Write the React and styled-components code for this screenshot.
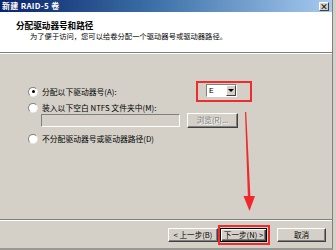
import React from "react";
import styled, { createGlobalStyle } from "styled-components";

const Global = createGlobalStyle`
  html, body { margin: 0; padding: 0; background: #d4d0c8; }
  body { font-family: "Noto Sans CJK SC", "Liberation Sans", sans-serif; }
`;

const Window = styled.div`
  position: relative;
  width: 332px;
  height: 248px;
  display: flex;
  flex-direction: column;
  background: #d4d0c8;
  border-right: 1px solid #808080;
  border-bottom: 2px solid #9a9892;
  box-sizing: content-box;
  overflow: hidden;
`;

const TitleBar = styled.div`
  height: 12px;
  display: flex;
  align-items: center;
  justify-content: space-between;
  padding: 0 3px 0 2px;
  background: linear-gradient(to right, #0a246a 0%, #3a6ea5 45%, #a6caf0 100%);
`;

const TitleText = styled.span`
  color: #fff;
  font-weight: bold;
  font-size: 8px;
  line-height: 12px;
  letter-spacing: 0.3px;
`;

const CloseBox = styled.div`
  width: 8px;
  height: 7px;
  background: #d4d0c8;
  border: 1px solid;
  border-color: #fff #404040 #404040 #fff;
  display: flex;
  align-items: center;
  justify-content: center;
  font-size: 8px;
  line-height: 7px;
  font-weight: bold;
  color: #000;
`;

const Header = styled.div`
  height: 40px;
  background: #fff;
  padding: 7px 0 0 16px;
  box-sizing: border-box;
`;

const Heading = styled.div`
  font-size: 8.6px;
  font-weight: bold;
  line-height: 12px;
  color: #000;
`;

const SubText = styled.div`
  font-size: 7.3px;
  line-height: 10px;
  padding-left: 14px;
  color: #000;
`;

const Separator = styled.div`
  height: 0;
  border-top: 1px solid #808080;
  border-bottom: 1px solid #fff;
`;

const Body = styled.div`
  height: 165px;
  padding: 27px 0 0 28px;
  box-sizing: border-box;
  display: flex;
  flex-direction: column;
`;

const OptionRow = styled.div`
  display: flex;
  align-items: center;
  height: ${(p) => p.h || 15}px;
`;

const Radio = styled.span`
  width: 8px;
  height: 8px;
  border-radius: 50%;
  background: #fff;
  border: 1px solid #808080;
  border-right-color: #e8e8e8;
  border-bottom-color: #e8e8e8;
  display: flex;
  align-items: center;
  justify-content: center;
  margin-right: 4px;
  flex-shrink: 0;
  &::after {
    content: "";
    width: 3px;
    height: 3px;
    border-radius: 50%;
    background: ${(p) => (p.checked ? "#000" : "transparent")};
  }
`;

const Label = styled.span`
  font-size: 7.8px;
  line-height: 10px;
  color: #000;
  width: ${(p) => (p.w ? p.w + "px" : "auto")};
  white-space: nowrap;
`;

const Highlight = styled.div`
  border: 2px solid #ee2c2c;
  padding: ${(p) => p.pad};
  display: flex;
`;

const Combo = styled.div`
  width: 31px;
  height: 13px;
  box-sizing: border-box;
  display: flex;
  background: #fff;
  border: 1px solid;
  border-color: #808080 #fff #fff #808080;
`;

const ComboValue = styled.span`
  flex: 1;
  font-family: "Liberation Mono", monospace;
  font-size: 8px;
  line-height: 11px;
  padding-left: 2px;
  color: #000;
`;

const ComboButton = styled.div`
  width: 10px;
  background: #d4d0c8;
  border: 1px solid;
  border-color: #fff #404040 #404040 #fff;
  box-sizing: border-box;
  display: flex;
  align-items: center;
  justify-content: center;
  &::after {
    content: "";
    border-left: 3px solid transparent;
    border-right: 3px solid transparent;
    border-top: 3px solid #000;
  }
`;

const FolderRow = styled.div`
  display: flex;
  align-items: center;
  padding-left: 13px;
  height: 14px;
  margin-bottom: 4px;
`;

const TextField = styled.div`
  width: 139px;
  height: 13px;
  box-sizing: border-box;
  border: 1px solid;
  border-color: #808080 #fff #fff #808080;
  background: #d4d0c8;
`;

const Button = styled.div`
  width: ${(p) => p.w}px;
  height: ${(p) => p.h || 14}px;
  box-sizing: border-box;
  background: #d4d0c8;
  border: 1px solid;
  border-color: ${(p) => (p.isDefault ? "#000" : "#fff #404040 #404040 #fff")};
  box-shadow: ${(p) =>
    p.isDefault
      ? "inset 1px 1px #fff, inset -1px -1px #404040, inset -2px -2px #808080"
      : "inset -1px -1px #808080"};
  display: flex;
  align-items: center;
  justify-content: center;
  font-size: 7.6px;
  line-height: 10px;
  white-space: nowrap;
  color: ${(p) => (p.disabled ? "#808080" : "#000")};
  text-shadow: ${(p) => (p.disabled ? "1px 1px #fff" : "none")};
  margin-left: ${(p) => p.ml || 0}px;
  margin-top: ${(p) => p.mt || 0}px;
`;

const Footer = styled.div`
  height: 27px;
  display: flex;
  align-items: flex-start;
  padding: 4px 0 0 168px;
  box-sizing: border-box;
`;

const ArrowOverlay = styled.svg`
  position: absolute;
  left: 236px;
  top: 110px;
  pointer-events: none;
`;

export default function App() {
  return (
    <>
      <Global />
      <Window>
        <TitleBar>
          <TitleText>新建 RAID-5 卷</TitleText>
          <CloseBox>×</CloseBox>
        </TitleBar>
        <Header>
          <Heading>分配驱动器号和路径</Heading>
          <SubText>为了便于访问，您可以给卷分配一个驱动器号或驱动器路径。</SubText>
        </Header>
        <Separator />
        <Body>
          <OptionRow h={21}>
            <Radio checked />
            <Label w={154}>分配以下驱动器号(A):</Label>
            <Highlight pad="1px 13px 3px 8px">
              <Combo>
                <ComboValue>E</ComboValue>
                <ComboButton />
              </Combo>
            </Highlight>
          </OptionRow>
          <OptionRow h={11}>
            <Radio />
            <Label>装入以下空白 NTFS 文件夹中(M):</Label>
          </OptionRow>
          <FolderRow>
            <TextField />
            <Button w={51} h={15} ml={7} disabled>
              浏览(R)...
            </Button>
          </FolderRow>
          <OptionRow>
            <Radio />
            <Label>不分配驱动器号或驱动器路径(D)</Label>
          </OptionRow>
        </Body>
        <Separator />
        <Footer>
          <Button w={50} mt={3}>
            &lt; 上一步(B)
          </Button>
          <Highlight pad="1px 1px 1px 0">
            <Button w={47} isDefault>
              下一步(N) &gt;
            </Button>
          </Highlight>
          <Button w={49} ml={7} mt={3}>
            取消
          </Button>
        </Footer>
        <ArrowOverlay width="24" height="104" viewBox="0 0 24 104">
          <path d="M9 2 L10.2 2 L14.6 90 L12 90 Z" fill="#f0282c" />
          <path d="M7.5 86 L19 86 L13.5 101 Z" fill="#f0282c" />
        </ArrowOverlay>
      </Window>
    </>
  );
}
